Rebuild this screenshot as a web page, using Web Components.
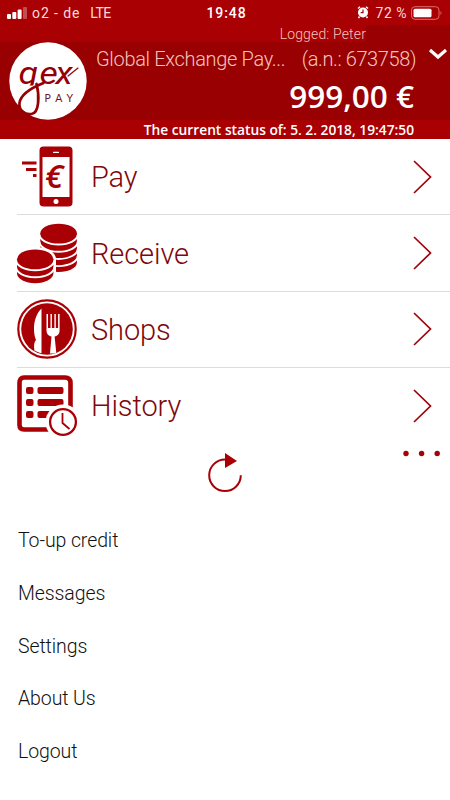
<!DOCTYPE html>
<html lang="en">
<head>
<meta charset="utf-8">
<meta name="viewport" content="width=device-width, initial-scale=1">
<title>GEX Pay</title>
<style>
    body {
        margin: 0;
        background: #fff;
        font-family: Roboto, "Open Sans", sans-serif;
        font-weight: 300;
    }
</style>
</head>
<body>
<pay-app></pay-app>

<script>
const icons = {
    pay: `
        <path fill-rule="evenodd" d="M26.500 .5h25a4 4 0 0 1 4 4v52a4 4 0 0 1-4 4H26.500a4 4 0 0 1-4-4v-52a4 4 0 0 1 4-4zM25.500 11v40h27V11z"/>
        <rect x="36" y="5.800" width="6" height="1.200" rx=".6" fill="#fff"/>
        <circle cx="39" cy="55.500" r="2.500" fill="#fff"/>
        <path d="M5 15.500h14.500v3H5zM9 22h10.500v3H9zM16 28h3.500v3H16z"/>
        <text x="28" y="42" font-family="Open Sans" font-size="33" font-weight="600" font-style="italic">€</text>`,
    receive: `
        <path d="M23.300 10.500v29a18.300 9.500 0 0 0 36.600 0v-29z"/>
        <ellipse cx="41.600" cy="10.500" rx="18.300" ry="9.800"/>
        <path fill="none" stroke="#fff" stroke-width="1.900" d="M22.500 11.500a19 10 0 0 0 38.200 0M22.500 18.700a19 10 0 0 0 38.200 0M22.500 25.900a19 10 0 0 0 38.200 0M22.500 33.100a19 10 0 0 0 38.200 0"/>
        <path fill="#fff" d="M-2 36a20.500 12 0 0 1 41 0v18H-2z"/>
        <path d="M0 36.300v14a18.200 10 0 0 0 36.400 0v-14z"/>
        <ellipse cx="18.200" cy="36.300" rx="18.200" ry="9.800"/>
        <path fill="none" stroke="#fff" stroke-width="1.900" d="M-.8 37.300a19 10 0 0 0 38 0M-.8 44.300a19 10 0 0 0 38 0"/>`,
    shops: `
        <circle cx="30" cy="30" r="28.700" fill="none" stroke="#a90005" stroke-width="2.200"/>
        <circle cx="30" cy="30" r="25.800"/>
        <g fill="#fff">
            <path d="M24.500 9.500c-4.500 4-7.500 12-7.500 20 0 6 1 8.500 2 11.500-2 2-2.300 6-1.600 10.500 2 1.200 4.500 2.200 7.100 2.700z"/>
            <path d="M29.500 15h1.500v14h2.500V15h1.400v14h2.500V15h1.400v14h2.300V15h1.500v16c0 4-2 6-5 6.500l1.700 16.200c-2.300.8-4.300 1-6.300.8l1.500-17c-3-.5-5-2.500-5-6.500z"/>
        </g>`,
    history: `
        <path d="M7 2.500h41q5.500 0 5.500 5.500v42q0 4.500-5.500 4.500H7q-4.500 0-4.500-4.500V8q0-5.500 4.500-5.500z" fill="none" stroke="#a90005" stroke-width="4.600"/>
        <g>
            <rect x="9" y="12" width="7.500" height="7" rx="2"/>
            <rect x="9" y="24" width="7.500" height="7" rx="2"/>
            <rect x="9" y="36" width="7.500" height="7" rx="2"/>
            <rect x="20.500" y="12" width="26" height="7" rx="2"/>
            <rect x="20.500" y="24" width="26" height="7" rx="2"/>
            <rect x="20.500" y="36" width="20" height="7" rx="2"/>
        </g>
        <circle cx="46" cy="47" r="17.500" fill="#fff"/>
        <circle cx="46" cy="47" r="12.900" fill="#fff" stroke="#a90005" stroke-width="2.300"/>
        <path d="M45.500 38v10l7 6" fill="none" stroke="#a90005" stroke-width="1.800"/>`
};

class StatusBar extends HTMLElement {
    constructor() {
        super();
        this.attachShadow({ mode: 'open' });
    }

    connectedCallback() {
        this.shadowRoot.innerHTML = `
        <style>
            :host {
                display: grid;
                grid-template-columns: 1fr auto 1fr;
                align-items: center;
                height: 25px;
                padding: 0 7px;
                box-sizing: border-box;
                color: #fff;
                font-size: 14px;
                font-weight: 400;
                white-space: pre;
            }
            div { display: flex; align-items: center; }
            .carrier { color: #ffdada; letter-spacing: .9px; }
            .carrier svg { margin-right: 5px; }
            .carrier .lte { margin-left: 10px; font-size: 14px; letter-spacing: -.5px; }
            .clock { font-weight: 500; letter-spacing: .9px; margin-left: 3px; }
            .power { justify-content: flex-end; }
            .power span { margin: 0 4px 0 7px; color: #ffdada; letter-spacing: .5px; }
        </style>
        <div class="carrier">
            <svg width="20" height="12" fill="#fff"><rect y="7" width="4" height="5" rx="1"/><rect x="5.300" y="5" width="4" height="7" rx="1"/><rect x="10.600" y="2.500" width="4" height="9.500" rx="1"/><rect x="16" width="4" height="12" rx="1" opacity=".3"/></svg>
            <span>o2 - de</span><span class="lte">LTE</span>
        </div>
        <div class="clock">19:48</div>
        <div class="power">
            <svg width="12" height="13" viewBox="0 0 12 13"><circle cx="6" cy="6.500" r="5" fill="#fff"/><path d="M1 2.500 3 .8M11 2.500 9 .8M2.500 10.500 1.500 12M9.500 10.500l1 1.500" stroke="#fff" stroke-width="1.500"/><path d="M6 3.500v3.200H3.700" fill="none" stroke="#a90005" stroke-width="1.200"/></svg>
            <span>72 %</span>
            <svg width="32" height="14" viewBox="0 0 32 14"><rect x=".5" y=".7" width="27.500" height="12.600" rx="3.500" fill="none" stroke="#dd6d6d"/><rect x="2.500" y="2.700" width="18" height="8.600" rx="1.500" fill="#fff"/><path d="M29.500 5q2 2 0 4z" fill="#dd6d6d"/></svg>
        </div>`;
    }
}
customElements.define('status-bar', StatusBar);

class GexLogo extends HTMLElement {
    constructor() {
        super();
        this.attachShadow({ mode: 'open' });
    }

    connectedCallback() {
        this.shadowRoot.innerHTML = `
        <style>
            :host { display: block; width: 78px; height: 78px; }
            svg { display: block; }
        </style>
        <svg width="78" height="78" viewBox="0 0 78 78">
            <clipPath id="baseline"><path d="M0 0h78v43.500H0z"/></clipPath>
            <circle cx="39" cy="39" r="38.700" fill="#fff"/>
            <g clip-path="url(#baseline)">
                <text transform="scale(1.15 1)" x="8.300 26.500 40.500" y="42" font-family="Roboto" font-size="31" font-style="italic" font-weight="400" fill="#960005">gex</text>
            </g>
            <g fill="none" stroke="#960005" stroke-linecap="round">
                <path d="M27.500 42c3 11 3 29-5 30-7 1-13-4-12-11 1-8 9-14 24-20" stroke-width="2.700"/>
                <path d="M59 34 69 26" stroke-width="1.200"/>
            </g>
            <text x="35.500" y="60" textLength="28.500" font-family="Lato" font-size="10.500" font-weight="400" fill="#6d1418">PAY</text>
        </svg>`;
    }
}
customElements.define('gex-logo', GexLogo);

class AccountHeader extends HTMLElement {
    constructor() {
        super();
        this.attachShadow({ mode: 'open' });
    }

    connectedCallback() {
        this.shadowRoot.innerHTML = `
        <style>
            :host {
                display: block;
                height: 139px;
                background: #a90003;
                color: #f6c5bd;
                white-space: nowrap;
            }
            .logged {
                height: 17px;
                display: flex;
                justify-content: flex-end;
                background: linear-gradient(#980002, #980002) right / 84px 100% no-repeat;
                padding-right: 84px;
                font-size: 14px;
                line-height: 18px;
                letter-spacing: .15px;
            }
            .account {
                height: 78px;
                display: grid;
                grid-template-columns: 78px 1fr 20px;
                column-gap: 9px;
                padding: 0 2px 0 9px;
                background: #980002;
            }
            .title {
                display: flex;
                justify-content: space-between;
                font-size: 20px;
                line-height: 24px;
                padding-top: 5px;
                margin-right: 3px;
            }
            .name { letter-spacing: -.33px; }
            .number { letter-spacing: -.4px; }
            .balance {
                margin: 8px 5px 0 0;
                color: #fff;
                font-family: "Open Sans", sans-serif;
                font-size: 31.500px;
                line-height: 34px;
                font-weight: 550;
                text-align: right;
            }
            .chevron { margin-top: 5px; }
            .updated {
                height: 19px;
                padding-right: 36px;
                color: #fff;
                font-family: "Open Sans", sans-serif;
                font-size: 13.750px;
                line-height: 20px;
                font-weight: 600;
                text-align: right;
            }
        </style>
        <status-bar></status-bar>
        <div class="logged"><span>Logged: Peter</span></div>
        <div class="account">
            <gex-logo></gex-logo>
            <div>
                <div class="title"><span class="name">Global Exchange Pay...</span><span class="number">(a.n.: 673758)</span></div>
                <div class="balance"><span>999,00 €</span></div>
            </div>
            <svg class="chevron" width="20" height="14"><path d="m2 3 8 7 8-7" fill="none" stroke="#fff" stroke-width="3.200"/></svg>
        </div>
        <div class="updated"><span>The current status of: 5. 2. 2018, 19:47:50</span></div>`;
    }
}
customElements.define('account-header', AccountHeader);

class ActionRow extends HTMLElement {
    constructor() {
        super();
        this.attachShadow({ mode: 'open' });
    }

    connectedCallback() {
        this.shadowRoot.innerHTML = `
        <style>
            :host {
                display: flex;
                align-items: center;
                height: 76.300px;
                box-sizing: border-box;
                margin-left: 17px;
                padding: .4px 17px 0 0;
                border-bottom: 1px solid #dcdcdc;
                color: #80080c;
                font-size: 29px;
                letter-spacing: -.1px;
            }
            :host(:last-of-type) { border-bottom-color: transparent; }
            .icon { width: 60px; height: 61px; margin-right: 14px; fill: #a90005; overflow: visible; }
            .label { flex: 1; padding-top: 1px; }
        </style>
        <svg class="icon" viewBox="0 0 60 61">${icons[this.getAttribute('icon')]}</svg>
        <span class="label"><slot></slot></span>
        <svg width="20" height="36"><path d="m1 2 16.500 16L1 34" fill="none" stroke="#a00008" stroke-width="1.700"/></svg>`;
    }
}
customElements.define('action-row', ActionRow);

class RefreshBar extends HTMLElement {
    constructor() {
        super();
        this.attachShadow({ mode: 'open' });
    }

    connectedCallback() {
        this.shadowRoot.innerHTML = `
        <style>
            :host {
                display: grid;
                grid-template-columns: 1fr 36px 1fr;
                height: 70px;
                padding: 5px 9px 0;
                box-sizing: border-box;
                fill: #a90005;
            }
            .refresh { grid-column: 2; margin-top: 3px; }
            .dots { justify-self: end; }
        </style>
        <svg class="refresh" width="36" height="42"><path d="M18 7.500A15.800 15.800 0 1 0 33.800 23.300" fill="none" stroke="#a90005" stroke-width="2"/><path d="m18 1 12 8-12 7z"/></svg>
        <svg class="dots" width="38" height="8"><circle cx="3" cy="4.500" r="2.700"/><circle cx="18.600" cy="4.500" r="2.700"/><circle cx="34.200" cy="4.500" r="2.700"/></svg>`;
    }
}
customElements.define('refresh-bar', RefreshBar);

class MenuItem extends HTMLElement {
    constructor() {
        super();
        this.attachShadow({ mode: 'open' });
    }

    connectedCallback() {
        this.shadowRoot.innerHTML = `
        <style>
            :host {
                display: flex;
                align-items: center;
                height: 52.750px;
                padding-left: 18px;
                color: #111;
                font-size: 19.500px;
                letter-spacing: -.1px;
            }
        </style>
        <span><slot></slot></span>`;
    }
}
customElements.define('menu-item', MenuItem);

class PayApp extends HTMLElement {
    constructor() {
        super();
        this.attachShadow({ mode: 'open' });
    }

    connectedCallback() {
        this.shadowRoot.innerHTML = `
        <style>
            :host { display: block; height: 800px; overflow: hidden; }
        </style>
        <account-header></account-header>
        <nav>
            <action-row icon="pay">Pay</action-row>
            <action-row icon="receive">Receive</action-row>
            <action-row icon="shops">Shops</action-row>
            <action-row icon="history">History</action-row>
        </nav>
        <refresh-bar></refresh-bar>
        <section>
            <menu-item>To-up credit</menu-item>
            <menu-item>Messages</menu-item>
            <menu-item>Settings</menu-item>
            <menu-item>About Us</menu-item>
            <menu-item>Logout</menu-item>
        </section>`;
    }
}
customElements.define('pay-app', PayApp);
</script>
</body>
</html>
